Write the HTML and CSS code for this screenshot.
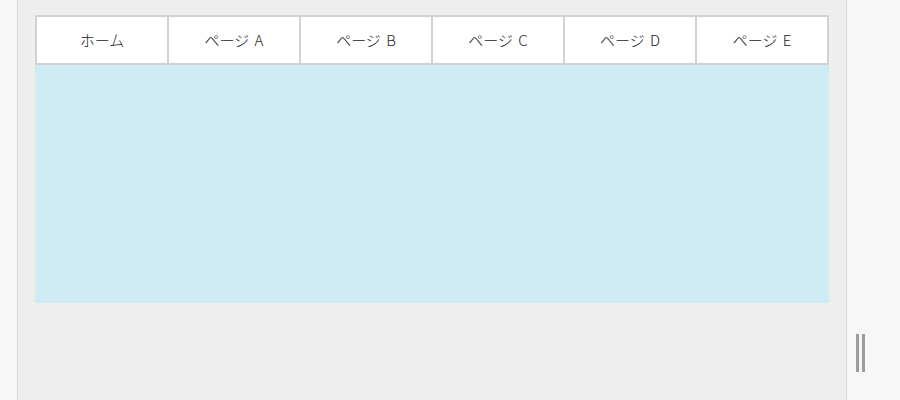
FILE: index.html
```html
<!DOCTYPE html>
<html lang="ja">
<head>
    <meta charset="UTF-8">
    <meta name="viewport" content="width=device-width, initial-scale=1.0">
    <title>タブ</title>
    <link rel="stylesheet" href="styles.css">
</head>
<body>

    <div class="side side-left"></div>

    <main class="panel">
        <ul class="tabs">
            <li class="tab">ホーム</li>
            <li class="tab">ページ A</li>
            <li class="tab">ページ B</li>
            <li class="tab">ページ C</li>
            <li class="tab">ページ D</li>
            <li class="tab">ページ E</li>
        </ul>
        <div class="tab-content"></div>
    </main>

    <div class="side side-right">
        <div class="resize-handle"></div>
    </div>

</body>
</html>
```

FILE: styles.css
```css
body {
    margin: 0;
    height: 400px;
    display: flex;
    background-color: #f6f6f6;
    font-family: 'Noto Sans CJK JP', 'Noto Sans', sans-serif;
    color: #333;
    overflow: hidden;
}

.side {
    background-color: #f7f7f7;
}

.side-left {
    width: 17px;
}

.side-right {
    flex: 1;
    display: flex;
    flex-direction: column;
    justify-content: flex-end;
    padding: 0 0 28px 9px;
}

.panel {
    width: 830px;
    box-sizing: border-box;
    background-color: #eeeeee;
    border-left: 1px solid #d8d8d8;
    border-right: 1px solid #d8d8d8;
    padding: 15px 17px 0 17px;
}

.tabs {
    list-style: none;
    margin: 0;
    padding: 0;
    display: grid;
    grid-template-columns: repeat(6, 1fr);
    border: 1px solid #d2d2d2;
    background-color: #fff;
}

.tab {
    box-sizing: border-box;
    height: 48px;
    padding-bottom: 2px;
    border: 1px solid #d2d2d2;
    display: flex;
    align-items: center;
    justify-content: center;
    font-size: 15px;
    font-weight: 300;
    color: #222;
    word-spacing: 2px;
}

.tab-content {
    height: 238px;
    background-color: #cfecf4;
}

.resize-handle {
    width: 3px;
    height: 38px;
    border-left: 3px solid #9d9d9d;
    border-right: 3px solid #9d9d9d;
}
```
